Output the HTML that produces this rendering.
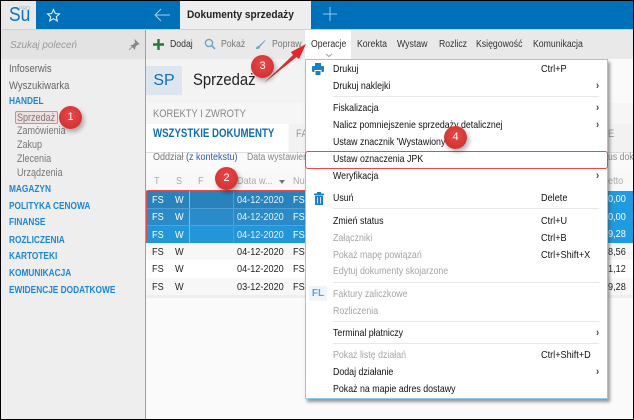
<!DOCTYPE html>
<html><head><meta charset="utf-8">
<style>
html,body{margin:0;padding:0}
body{width:634px;height:420px;position:relative;overflow:hidden;background:#fafafa;font-family:"Liberation Sans",sans-serif;font-size:10.5px;color:#222}
#p{position:absolute;left:0;top:0;width:634px;height:420px;filter:blur(.3px)}
.a{position:absolute;white-space:nowrap}
.t{position:absolute;white-space:nowrap;line-height:14px;height:14px;transform:scaleX(.87);transform-origin:left center}
.nav{color:#1c87d6;font-weight:bold;font-size:10px;left:9px;transform:scaleX(.83)}
.sub{color:#777;left:17px;font-size:11px;transform:scaleX(.82)}
.top{color:#666;left:9px;font-size:11px;transform:scaleX(.86)}
.m{left:333px;color:#111;font-size:10.5px;transform:scaleX(.84)}
.d{color:#a4a4a4}
.s{left:541px;font-size:10.5px;color:#111}
.ar{left:596px;font-size:11px;font-weight:bold;color:#444}
.sep{position:absolute;left:333px;width:266px;height:1px;background:#e8e8e8}
.b{position:absolute;border-radius:50%;background:radial-gradient(circle at 50% 40%,#e84848,#c92a2a);color:#fff;text-align:center;font-size:11px;box-shadow:2px 3px 5px rgba(0,0,0,.3)}
.w{color:#fff}
.r{position:absolute;left:146px;width:160px;height:17px}
.hd{color:#aaa;font-size:10.5px}
</style></head><body>
<div id="p">
<!-- sidebar -->
<div class="a" style="left:1px;top:59px;width:144px;height:360px;background:#eeeeee"></div>
<div class="a" style="left:1px;top:30px;width:144px;height:29px;background:#e3e3e3"></div>
<div class="t" style="left:10px;top:38px;color:#999;font-style:italic;font-size:10.5px;transform:scaleX(.94)">Szukaj poleceń</div>
<svg class="a" style="left:128px;top:39px" width="12" height="12" viewBox="0 0 12 12"><path d="M7 1l4 4-2 .6-2 2.400-.3 2L3 6.400l2-.3L7.400 4z M4 8l-3 3" fill="#888" stroke="#888" stroke-width=".8"/></svg>
<div class="t top" style="top:62px">Infoserwis</div>
<div class="t top" style="top:79px">Wyszukiwarka</div>
<div class="t nav" style="top:95px">HANDEL</div>
<div class="t sub" style="top:111px">Sprzedaż</div>
<div class="a" style="left:15px;top:111px;width:41px;height:11px;border:1px solid #ee8080;border-radius:2px;background:rgba(240,120,120,.12)"></div>
<div class="t sub" style="top:124px">Zamówienia</div>
<div class="t sub" style="top:138px">Zakup</div>
<div class="t sub" style="top:152px">Zlecenia</div>
<div class="t sub" style="top:166px">Urządzenia</div>
<div class="t nav" style="top:183px">MAGAZYN</div>
<div class="t nav" style="top:200px">POLITYKA CENOWA</div>
<div class="t nav" style="top:216px">FINANSE</div>
<div class="t nav" style="top:234px">ROZLICZENIA</div>
<div class="t nav" style="top:250px">KARTOTEKI</div>
<div class="t nav" style="top:267px">KOMUNIKACJA</div>
<div class="t nav" style="top:284px">EWIDENCJE DODATKOWE</div>
<div class="a" style="left:145px;top:29px;width:1px;height:390px;background:#6aaede"></div>

<!-- top bar -->
<div class="a" style="left:1px;top:1px;width:632px;height:28px;background:#0070b9"></div>
<div class="a" style="left:1px;top:29px;width:632px;height:1px;background:#d0d0d0"></div>
<div class="a" style="left:1px;top:1px;width:35px;height:28px;background:#e9e9e9"></div>
<div class="t" style="left:9px;top:3px;font-size:20px;line-height:24px;height:24px;color:#0a76bb">Su</div>
<div class="a" style="left:19px;top:6px;font-size:5px;line-height:6px;color:#8fb8d4">PRO</div>
<svg class="a" style="left:46px;top:8px" width="15" height="15" viewBox="0 0 15 15"><path d="M7.500 1.500l1.800 4 4.200.4-3.200 2.800 1 4.300-3.800-2.300-3.800 2.300 1-4.300L1.500 5.900l4.200-.4z" fill="none" stroke="#dfeef8" stroke-width="1.100"/></svg>
<svg class="a" style="left:153px;top:6px" width="18" height="18" viewBox="0 0 18 18"><path d="M17 9H2M8 3L2 9l6 6" fill="none" stroke="#a8cfe8" stroke-width="1"/></svg>
<div class="a" style="left:180px;top:1px;width:131px;height:28px;background:#eeeeee"></div>
<div class="t" style="left:187px;top:8px;font-weight:bold;font-size:11px;color:#222;transform:scaleX(.92)">Dokumenty sprzedaży</div>
<svg class="a" style="left:323px;top:7px" width="14" height="14" viewBox="0 0 14 14"><path d="M7 0v14M0 7h14" stroke="#9cc8e4" stroke-width="1"/></svg>

<!-- toolbar -->
<div class="a" style="left:146px;top:30px;width:487px;height:29px;background:#e9e9e9"></div>
<svg class="a" style="left:153px;top:39px" width="11" height="11" viewBox="0 0 11 11"><path d="M5.500 0v11M0 5.500h11" stroke="#1e7d32" stroke-width="2.400"/></svg>
<div class="t" style="left:170px;top:38px;color:#333;font-size:10px">Dodaj</div>
<svg class="a" style="left:204px;top:38px" width="12" height="12" viewBox="0 0 12 12"><circle cx="5" cy="5" r="3.600" fill="none" stroke="#6aa5d0" stroke-width="1.400"/><path d="M7.700 7.700L11 11" stroke="#6aa5d0" stroke-width="1.600"/></svg>
<div class="t" style="left:221px;top:38px;color:#777;font-size:10px">Pokaż</div>
<svg class="a" style="left:255px;top:39px" width="11" height="11" viewBox="0 0 11 11"><path d="M1 10c0-2 1-3 2.500-3L10 1l.5.500L5 8c0 1.500-2 2.500-4 2z" fill="#7ba6c8"/></svg>
<div class="t" style="left:272px;top:38px;color:#777;font-size:10px">Popraw</div>
<div class="a" style="left:305px;top:30px;width:46px;height:29px;background:#fff"></div>
<div class="t" style="left:311px;top:38px;font-size:10px;color:#333">Operacje</div>
<div class="t" style="left:357px;top:38px;font-size:10px;color:#333">Korekta</div>
<div class="t" style="left:397px;top:38px;font-size:10px;color:#333">Wystaw</div>
<div class="t" style="left:439px;top:38px;font-size:10px;color:#333">Rozlicz</div>
<div class="t" style="left:476px;top:38px;font-size:10px;color:#333">Księgowość</div>
<div class="t" style="left:533px;top:38px;font-size:10px;color:#333">Komunikacja</div>
<svg class="a" style="left:325px;top:53px" width="8" height="5" viewBox="0 0 8 5"><path d="M1 1l3 2.500L7 1" fill="none" stroke="#999" stroke-width="1"/></svg>

<!-- header -->
<div class="a" style="left:146px;top:59px;width:160px;height:44px;background:#f3f3f3"></div>
<div class="a" style="left:146px;top:66px;width:36px;height:29px;background:#dde6ee;color:#0f6fb2;font-size:16px;line-height:29px;text-align:center">SP</div>
<div class="t" style="left:193px;top:70px;height:20px;line-height:20px;font-size:17px;color:#222">Sprzedaż</div>
<div class="a" style="left:146px;top:103px;width:488px;height:21px;background:#f6f6f6"></div>
<div class="t" style="left:153px;top:107px;color:#888;font-size:11px;transform:scaleX(.85)">KOREKTY I ZWROTY</div>
<div class="a" style="left:146px;top:124px;width:142px;height:28px;background:#fff"></div>
<div class="a" style="left:289px;top:124px;width:345px;height:28px;background:#f2f2f2"></div>
<div class="t" style="left:153px;top:127px;color:#0e6fae;font-weight:bold;font-size:11.500px;transform:scaleX(.84)">WSZYSTKIE DOKUMENTY</div>
<div class="t" style="left:296px;top:127px;color:#999;font-size:11px">FA</div>
<div class="t" style="left:608px;top:127px;color:#999;font-size:11px">E</div>
<div class="a" style="left:146px;top:152px;width:488px;height:1px;background:#ddd"></div>
<div class="t" style="left:153px;top:151px;color:#777;font-size:10px;transform:scaleX(.9)">Oddział <span style="color:#2b5fb0">(z kontekstu)</span></div>
<div class="t" style="left:247px;top:151px;color:#888;font-size:10px">Data wystawienia</div>
<div class="t" style="left:608px;top:151px;color:#888;font-size:10px">us dok</div>

<!-- grid -->
<div class="a" style="left:146px;top:172px;width:488px;height:19px;background:#f8f8f8"></div>
<div class="t hd" style="left:154px;top:174px">T</div>
<div class="t hd" style="left:176px;top:174px">S</div>
<div class="t hd" style="left:198px;top:174px">F</div>
<div class="t hd" style="left:237px;top:174px">Data w...</div>
<div class="a" style="left:279px;top:180px;border:3.500px solid transparent;border-top:4px solid #777;border-bottom:0"></div>
<div class="t hd" style="left:293px;top:174px">Nu</div>
<div class="t hd" style="left:608px;top:174px">etto</div>

<div class="r" style="top:191px;background:#2a82bd"></div>
<div class="r" style="top:208px;background:#2a8bc8"></div>
<div class="r" style="top:225px;background:#2296d8;height:18px"></div>
<div class="a" style="left:189px;top:191px;width:1px;height:52px;background:#7fbde4"></div>
<div class="a" style="left:233px;top:191px;width:1px;height:52px;background:#4b9fd5"></div>
<div class="a" style="left:146px;top:208px;width:160px;height:1px;background:#4b9fd5"></div>
<div class="a" style="left:146px;top:225px;width:160px;height:1px;background:#4ba6e0"></div>
<div class="a" style="left:607px;top:191px;width:27px;height:52px;background:#1f9be2"></div>

<div class="t w" style="left:152px;top:193px">FS</div><div class="t w" style="left:175px;top:193px">W</div><div class="t w" style="left:237px;top:193px;color:#e8f4fc">04-12-2020</div><div class="t w" style="left:293px;top:193px">FS</div>
<div class="t w" style="left:152px;top:210px">FS</div><div class="t w" style="left:175px;top:210px">W</div><div class="t w" style="left:237px;top:210px;color:#e8f4fc">04-12-2020</div><div class="t w" style="left:293px;top:210px">FS</div>
<div class="t w" style="left:152px;top:228px">FS</div><div class="t w" style="left:175px;top:228px">W</div><div class="t w" style="left:237px;top:228px;color:#e8f4fc">04-12-2020</div><div class="t w" style="left:293px;top:228px">FS</div>
<div class="t w" style="left:608px;top:192px">0,00</div>
<div class="t w" style="left:608px;top:210px">0,00</div>
<div class="t w" style="left:608px;top:227px">9,28</div>

<div class="a" style="left:146px;top:243px;width:488px;height:17px;background:#f7f7f7"></div>
<div class="a" style="left:146px;top:260px;width:488px;height:18px;background:#fff"></div>
<div class="a" style="left:146px;top:278px;width:488px;height:17px;background:#f7f7f7"></div>
<div class="a" style="left:146px;top:295px;width:488px;height:3px;background:#eeeeee"></div>
<div class="t" style="left:152px;top:245px">FS</div><div class="t" style="left:175px;top:245px">W</div><div class="t" style="left:237px;top:245px">04-12-2020</div><div class="t" style="left:293px;top:245px">FS</div><div class="t" style="left:608px;top:245px">8,56</div>
<div class="t" style="left:152px;top:262px">FS</div><div class="t" style="left:175px;top:262px">W</div><div class="t" style="left:237px;top:262px">04-12-2020</div><div class="t" style="left:293px;top:262px">FS</div><div class="t" style="left:608px;top:262px">1,12</div>
<div class="t" style="left:152px;top:280px">FS</div><div class="t" style="left:175px;top:280px">W</div><div class="t" style="left:237px;top:280px">03-12-2020</div><div class="t" style="left:293px;top:280px">FS</div><div class="t" style="left:608px;top:280px">9,28</div>

<!-- red rect around rows -->
<div class="a" style="left:146px;top:190px;width:160px;height:52px;border:1px solid #e34a4a;border-bottom:0;border-radius:2px"></div>

<!-- menu -->
<div class="a" style="left:305px;top:59px;width:301px;height:338px;background:#fff;border:1px solid #8ccbf0;box-shadow:2px 3px 3px rgba(70,70,70,.55)"></div>
<svg class="a" style="left:312px;top:63px" width="12" height="12" viewBox="0 0 12 12"><path d="M3 0h6v3H3zM1 3h10a1 1 0 011 1v4a1 1 0 01-1 1H9.500V7h-7v2H1a1 1 0 01-1-1V4a1 1 0 011-1zM3.500 8h5v4h-5z" fill="#1a80c4"/></svg>
<div class="t m" style="top:62px">Drukuj</div><div class="t s" style="top:62px">Ctrl+P</div>
<div class="t m" style="top:79px">Drukuj naklejki</div><div class="t ar" style="top:79px">›</div>
<div class="sep" style="top:96px"></div>
<div class="t m" style="top:101px">Fiskalizacja</div><div class="t ar" style="top:101px">›</div>
<div class="t m" style="top:118px">Nalicz pomniejszenie sprzedaży detalicznej</div><div class="t ar" style="top:118px">›</div>
<div class="t m" style="top:135px">Ustaw znacznik 'Wystawiony na'</div>
<div class="t m" style="top:152px">Ustaw oznaczenia JPK</div>
<div class="a" style="left:305px;top:151px;width:301px;height:16px;border:1px solid #e34a4a;border-radius:3px"></div>
<div class="t m" style="top:169px">Weryfikacja</div><div class="t ar" style="top:169px">›</div>
<svg class="a" style="left:314px;top:192px" width="10" height="13" viewBox="0 0 10 13"><path d="M0 1.500h10v1.500H0zM3 0h4v1.500H3zM1 3.500h8V13H1z" fill="#1a80c4"/><path d="M3.500 5v6.500M6.500 5v6.500" stroke="#fff" stroke-width=".8"/></svg>
<div class="t m" style="top:191px">Usuń</div><div class="t s" style="top:191px">Delete</div>
<div class="sep" style="top:208px"></div>
<div class="t m" style="top:214px">Zmień status</div><div class="t s" style="top:214px">Ctrl+U</div>
<div class="t m d" style="top:231px">Załączniki</div><div class="t s d" style="top:231px">Ctrl+B</div>
<div class="t m d" style="top:248px">Pokaż mapę powiązań</div><div class="t s d" style="top:248px">Ctrl+Shift+X</div>
<div class="t m d" style="top:264px">Edytuj dokumenty skojarzone</div>
<div class="sep" style="top:282px"></div>
<div class="a" style="left:309px;top:286px;width:18px;height:15px;background:#eef5fb;color:#5aa5d8;font-weight:bold;font-size:10px;line-height:15px;text-align:center">FL</div>
<div class="t m d" style="top:287px">Faktury zaliczkowe</div>
<div class="t m d" style="top:304px">Rozliczenia</div>
<div class="sep" style="top:321px"></div>
<div class="t m" style="top:326px">Terminal płatniczy</div><div class="t ar" style="top:326px">›</div>
<div class="sep" style="top:343px"></div>
<div class="t m d" style="top:348px">Pokaż listę działań</div><div class="t s d" style="top:348px">Ctrl+Shift+D</div>
<div class="t m" style="top:365px">Dodaj działanie</div><div class="t ar" style="top:365px">›</div>
<div class="t m" style="top:382px">Pokaż na mapie adres dostawy</div>

<!-- arrow -->
<svg class="a" style="left:255px;top:35px" width="60" height="55" viewBox="0 0 60 55"><path d="M9 48L38 20l-2-3L51 9 44 24l-2.500-2z" fill="#e8262a"/></svg>

<!-- badges -->
<div class="b" style="left:59px;top:106px;width:23px;height:23px;line-height:23px">1</div>
<div class="b" style="left:215px;top:167px;width:23px;height:23px;line-height:23px">2</div>
<div class="b" style="left:251px;top:55px;width:23px;height:23px;line-height:23px">3</div>
<div class="b" style="left:444px;top:126px;width:23px;height:23px;line-height:23px">4</div>
</div>
<!-- frame -->
<div class="a" style="left:0;top:0;width:632px;height:418px;border:1px solid #000"></div>
</body></html>
